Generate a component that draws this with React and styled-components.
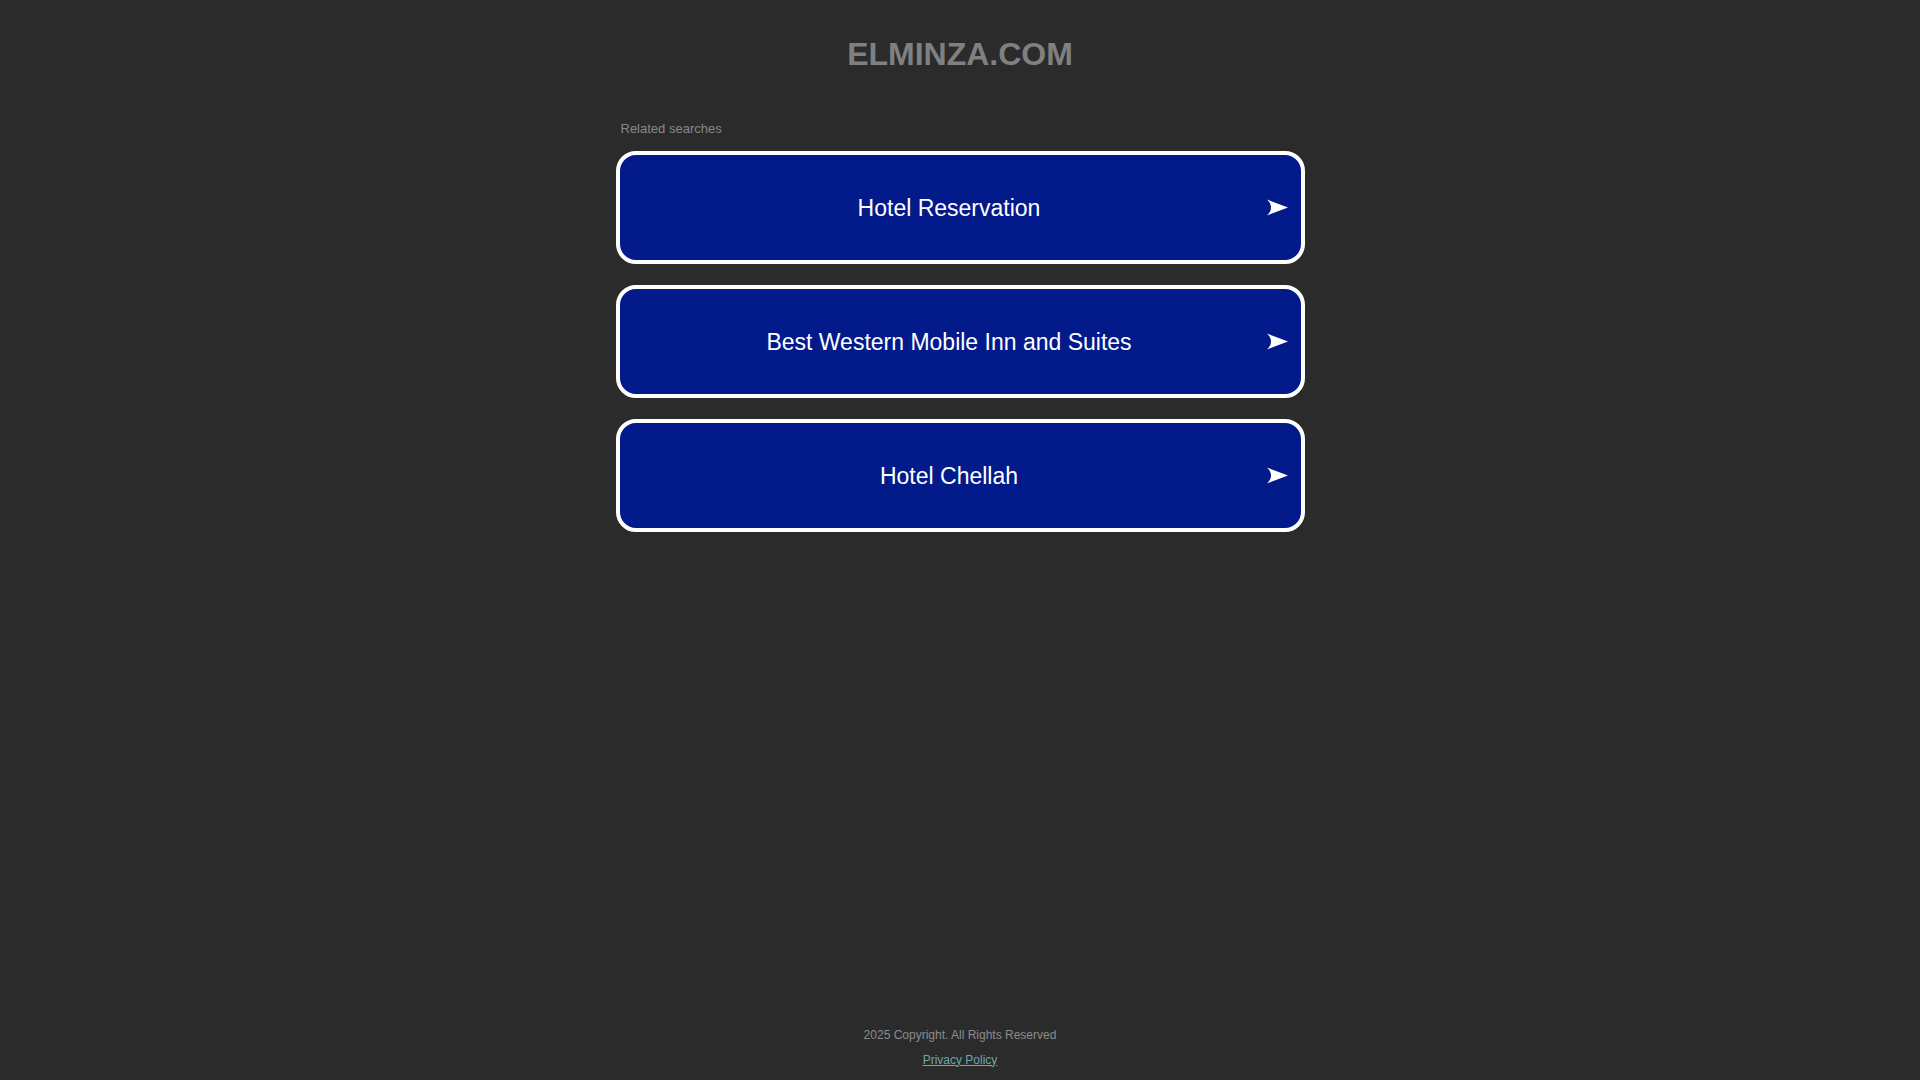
import React from 'react'
import styled, { createGlobalStyle } from 'styled-components'

const searches = [
  'Hotel Reservation',
  'Best Western Mobile Inn and Suites',
  'Hotel Chellah',
]

export default function App() {
  return (
    <>
      <GlobalStyle />
      <Page>
        {/* Domain name */}
        <Domain>ELMINZA.COM</Domain>

        <Searches>
          <Label>Related searches</Label>
          {searches.map((s) => (
            <SearchCard key={s} href="#">
              <CardText>{s}</CardText>
              <Arrow viewBox="0 0 21 17" aria-hidden="true">
                <path d="M0 0.5 L21 8.5 L0 16.5 Q8 8.5 0 0.5 Z" fill="#fff" />
              </Arrow>
            </SearchCard>
          ))}
        </Searches>

        <Footer>
          <Copy>2025 Copyright. All Rights Reserved</Copy>
          <PolicyLink href="#">Privacy Policy</PolicyLink>
        </Footer>
      </Page>
    </>
  )
}

const GlobalStyle = createGlobalStyle`
  html, body {
    margin: 0;
    padding: 0;
    background: #2b2b2b;
    font-family: "Liberation Sans", Arial, sans-serif;
  }
  * { box-sizing: border-box; }
`

const Page = styled.div`
  min-height: 100vh;
  display: flex;
  flex-direction: column;
  align-items: center;
  padding-top: 36px;
`

const Domain = styled.h1`
  margin: 0;
  font-size: 32px;
  line-height: 36px;
  font-weight: 700;
  color: #808080;
  text-align: center;
`

const Searches = styled.section`
  width: 689px;
  margin-top: 48.8px;
  display: flex;
  flex-direction: column;
`

const Label = styled.div`
  padding-left: 5px;
  font-size: 13px;
  line-height: 16px;
  color: #898989;
  margin-bottom: 14.2px;
`

const SearchCard = styled.a`
  display: flex;
  align-items: center;
  height: 113px;
  margin-bottom: 21px;
  padding: 0 13px 0 12px;
  background: #021a8a;
  border: 4px solid #fff;
  border-radius: 20px;
  text-decoration: none;
  color: #fff;

  &:last-child {
    margin-bottom: 0;
  }
`

const CardText = styled.span`
  flex: 1;
  padding-top: 2px;
  text-align: center;
  font-size: 23px;
  line-height: 28px;
`

const Arrow = styled.svg`
  width: 21px;
  height: 17px;
  flex-shrink: 0;
`

const Footer = styled.footer`
  margin-top: auto;
  padding-bottom: 12.4px;
  display: flex;
  flex-direction: column;
  align-items: center;
  gap: 10px;
  font-size: 12px;
  line-height: 15px;
`

const Copy = styled.div`
  color: #8c8c8c;
`

const PolicyLink = styled.a`
  color: #6ea8a9;
  text-decoration: underline;
`
